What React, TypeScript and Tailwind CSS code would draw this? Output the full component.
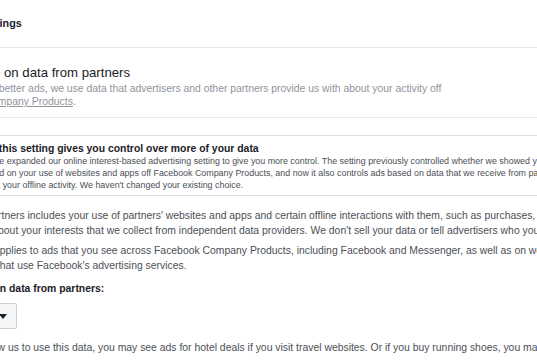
import { ReactNode } from "react";

const FONT = "font-['Liberation_Sans',Arial,sans-serif]";

function Line({ children }: { children: ReactNode }) {
  return <div className="whitespace-nowrap">{children}</div>;
}

function Caret() {
  return (
    <svg width="8" height="5" viewBox="0 0 8 5" className="shrink-0">
      <path d="M0 0h8L4 5z" fill="#1d2129" />
    </svg>
  );
}

export default function App() {
  return (
    <div className={`w-[537px] h-[360px] overflow-hidden bg-white ${FONT}`}>
      {/* header */}
      <div className="h-[48px] border-b border-[#e5e6e9]">
        <div className="-ml-[62px] pt-[16px] text-[10.8px] leading-[14px] font-bold text-[#1d2129] whitespace-nowrap">
          Your ad settings
        </div>
      </div>

      {/* setting row */}
      <div className="border-b border-[#e5e6e9]">
        <div className="-ml-[62px] pt-[17px] pb-[9px]">
          <div className="text-[13.2px] leading-[16px] text-[#1d2129] whitespace-nowrap">
            Ads based on data from partners
          </div>
          <div className="mt-[1px] text-[10.4px] leading-[13px] text-[#90949c]">
            <Line>
              To show you better ads, we use data that advertisers and other partners provide us with about your
              activity off
            </Line>
            <Line>
              <span className="-ml-[2px] underline">Facebook Company Products</span>.
            </Line>
          </div>
        </div>
      </div>

      {/* info box */}
      <div className="-ml-[62px] w-[700px] mt-[17px] border border-[#dddfe2] rounded-[3px] bg-white flex">
        <div className="w-[41px] shrink-0 flex justify-center pt-[8px]">
          <div className="w-[14px] h-[14px] rounded-full bg-[#4267b2] text-white text-[9px] leading-[14px] font-bold text-center">
            i
          </div>
        </div>
        <div className="pt-[7px] pb-[4px]">
          <div className="-ml-[6px] text-[10.4px] leading-[12px] font-bold text-[#1d2129] whitespace-nowrap">
            How this setting gives you control over more of your data
          </div>
          <div className="text-[8.9px] leading-[12px] text-[#4b4f56]">
            <Line>
              We've expanded our online interest-based advertising setting to give you more control. The setting
              previously controlled whether we showed you ads
            </Line>
            <Line>
              based on your use of websites and apps off Facebook Company Products, and now it also controls ads
              based on data that we receive from partners
            </Line>
            <Line>
              <span className="-ml-[2px]">about your offline activity. We haven't changed your existing choice.</span>
            </Line>
          </div>
        </div>
      </div>

      {/* body */}
      <div className="-ml-[62px] text-[10.4px] leading-[15px] text-[#4b4f56]">
        <div className="mt-[12px]">
          <Line>
            Data from partners includes your use of partners' websites and apps and certain offline interactions
            with them, such as purchases, and
          </Line>
          <Line>
            information about your interests that we collect from independent data providers. We don't sell your
            data or tell advertisers who you are.
          </Line>
        </div>
        <div className="mt-[5px]">
          <Line>
            This setting applies to ads that you see across Facebook Company Products, including Facebook and
            Messenger, as well as on websites and
          </Line>
          <Line>mobile apps that use Facebook's advertising services.</Line>
        </div>

        <div className="mt-[8px] font-bold text-[#1d2129] whitespace-nowrap">Ads based on data from partners:</div>

        <button
          type="button"
          className="mt-[7px] h-[26px] w-[79px] flex items-center justify-between pl-[10px] pr-[9px] bg-[#f5f6f7] border border-[#ccd0d5] rounded-[2px] text-[10.4px] font-bold text-[#4b4f56]"
        >
          Allowed
          <Caret />
        </button>

        <div className="mt-[11px]">
          <Line>
            So if you allow us to use this data, you may see ads for hotel deals if you visit travel websites. Or if
            you buy running shoes, you may see ads for sportswear.
          </Line>
        </div>
      </div>
    </div>
  );
}
